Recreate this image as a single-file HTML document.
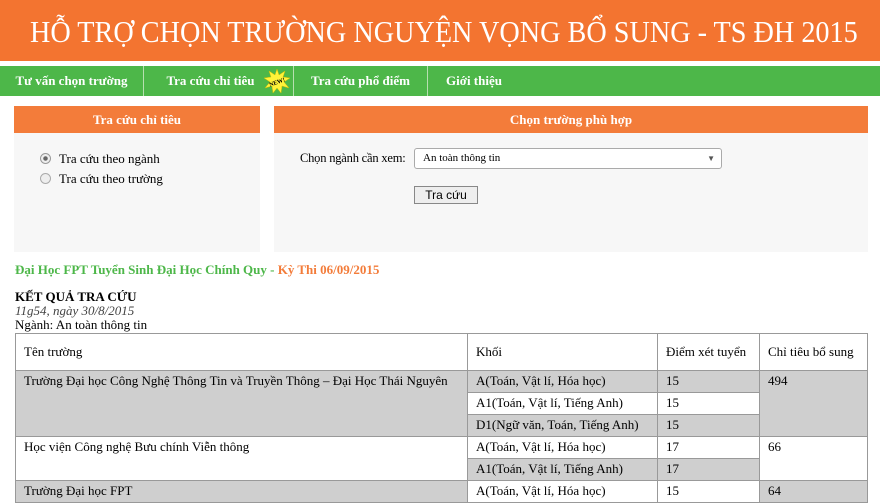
<!DOCTYPE html>
<html><head><meta charset="utf-8"><style>
body{margin:0;width:880px;height:495px;overflow:hidden;background:#fff;font-family:"Liberation Serif",serif;position:relative}
.a{position:absolute}
#ban{left:0;top:0;width:880px;height:61px;background:#f37430;color:#fff;font-size:31px;line-height:63px;white-space:nowrap}
#ban span{display:inline-block;transform:scaleX(0.91);transform-origin:left center;margin-left:30px}
#nav{left:0;top:66px;width:880px;height:30px;background:#4db749}
.n{position:absolute;top:0;height:30px;line-height:30px;color:#fff;font-weight:bold;font-size:13px;text-align:center;border-right:1px solid #b7dfb0}
.ph{background:#f37c3a;color:#fff;font-weight:bold;font-size:13px;text-align:center;height:27px;line-height:27px}
.pb{background:#f7f7f7}
table{border-collapse:collapse;position:absolute;left:15px;top:333px;width:853px;font-size:13px}
td{border:1px solid #999;padding:0 8px;vertical-align:top;height:21px;line-height:20px}
.g{background:#cfcfcf}
</style></head><body>
<div class="a" id="ban"><span>HỖ TRỢ CHỌN TRƯỜNG NGUYỆN VỌNG BỔ SUNG - TS ĐH 2015</span></div>
<div class="a" id="nav">
<div class="n" style="left:0;width:143px">Tư vấn chọn trường</div>
<div class="n" style="left:144px;width:149px"><span style="margin-left:-16px">Tra cứu chỉ tiêu</span>
<svg style="position:absolute;left:120px;top:3px" width="26" height="24" viewBox="0 0 26 24"><polygon points="13,0 15,6 21,2 19,8 26,9 20,13 25,19 18,17 17,24 13,19 9,24 8,17 1,19 6,13 0,9 7,8 5,2 11,6" fill="#fff33a" stroke="#d8c000" stroke-width=".5"/><text x="13" y="15" font-size="6" font-weight="bold" text-anchor="middle" fill="#000" transform="rotate(-20 13 13)">NEW!</text></svg></div>
<div class="n" style="left:294px;width:133px">Tra cứu phổ điểm</div>
<div class="n" style="left:428px;width:92px;border:none">Giới thiệu</div>
</div>
<div class="a" style="left:14px;top:106px;width:246px"><div class="ph">Tra cứu chỉ tiêu</div>
<div class="pb" style="height:119px;font-size:13px;position:relative">
<div class="a" style="left:26px;top:18px"><span style="display:inline-block;width:9px;height:9px;border:1px solid #999;border-radius:50%;background:radial-gradient(#666 30%,#eee 40%);vertical-align:-1px;margin-right:8px"></span>Tra cứu theo ngành</div>
<div class="a" style="left:26px;top:38px"><span style="display:inline-block;width:9px;height:9px;border:1px solid #aaa;border-radius:50%;background:#eee;vertical-align:-1px;margin-right:8px"></span>Tra cứu theo trường</div>
</div></div>
<div class="a" style="left:274px;top:106px;width:594px"><div class="ph">Chọn trường phù hợp</div>
<div class="pb" style="height:119px;font-size:12.5px;position:relative">
<div class="a" style="left:26px;top:18px;letter-spacing:-0.2px">Chọn ngành cần xem:</div>
<div class="a" style="left:140px;top:15px;width:306px;height:19px;border:1px solid #aaa;border-radius:3px;background:#fff;font-size:11px;line-height:19px;text-indent:8px">An toàn thông tin<span style="position:absolute;right:6px;font-size:8px;color:#555">▼</span></div>
<div class="a" style="left:140px;top:53px;width:62px;height:16px;border:1px solid #888;background:#eee;font-family:'Liberation Sans',sans-serif;font-size:12px;line-height:16px;text-align:center">Tra cứu</div>
</div></div>
<div class="a" style="left:15px;top:262px;font-size:13px;font-weight:bold;color:#4db749">Đại Học FPT Tuyển Sinh Đại Học Chính Quy - <span style="color:#f37c3a">Kỳ Thi 06/09/2015</span></div>
<div class="a" style="left:15px;top:290px;font-size:13px;line-height:14px"><b>KẾT QUẢ TRA CỨU</b><br><i style="color:#444">11g54, ngày 30/8/2015</i><br>Ngành: An toàn thông tin</div>
<table>
<tr><td style="width:435px;height:36px;line-height:36px">Tên trường</td><td style="width:173px;line-height:36px">Khối</td><td style="width:85px;line-height:36px">Điểm xét tuyển</td><td style="line-height:36px">Chỉ tiêu bổ sung</td></tr>
<tr><td rowspan="3" class="g">Trường Đại học Công Nghệ Thông Tin và Truyền Thông – Đại Học Thái Nguyên</td><td class="g">A(Toán, Vật lí, Hóa học)</td><td class="g">15</td><td rowspan="3" class="g">494</td></tr>
<tr><td>A1(Toán, Vật lí, Tiếng Anh)</td><td>15</td></tr>
<tr><td class="g">D1(Ngữ văn, Toán, Tiếng Anh)</td><td class="g">15</td></tr>
<tr><td rowspan="2">Học viện Công nghệ Bưu chính Viễn thông</td><td>A(Toán, Vật lí, Hóa học)</td><td>17</td><td rowspan="2">66</td></tr>
<tr><td class="g">A1(Toán, Vật lí, Tiếng Anh)</td><td class="g">17</td></tr>
<tr><td class="g">Trường Đại học FPT</td><td>A(Toán, Vật lí, Hóa học)</td><td>15</td><td class="g">64</td></tr>
</table>
</body></html>
